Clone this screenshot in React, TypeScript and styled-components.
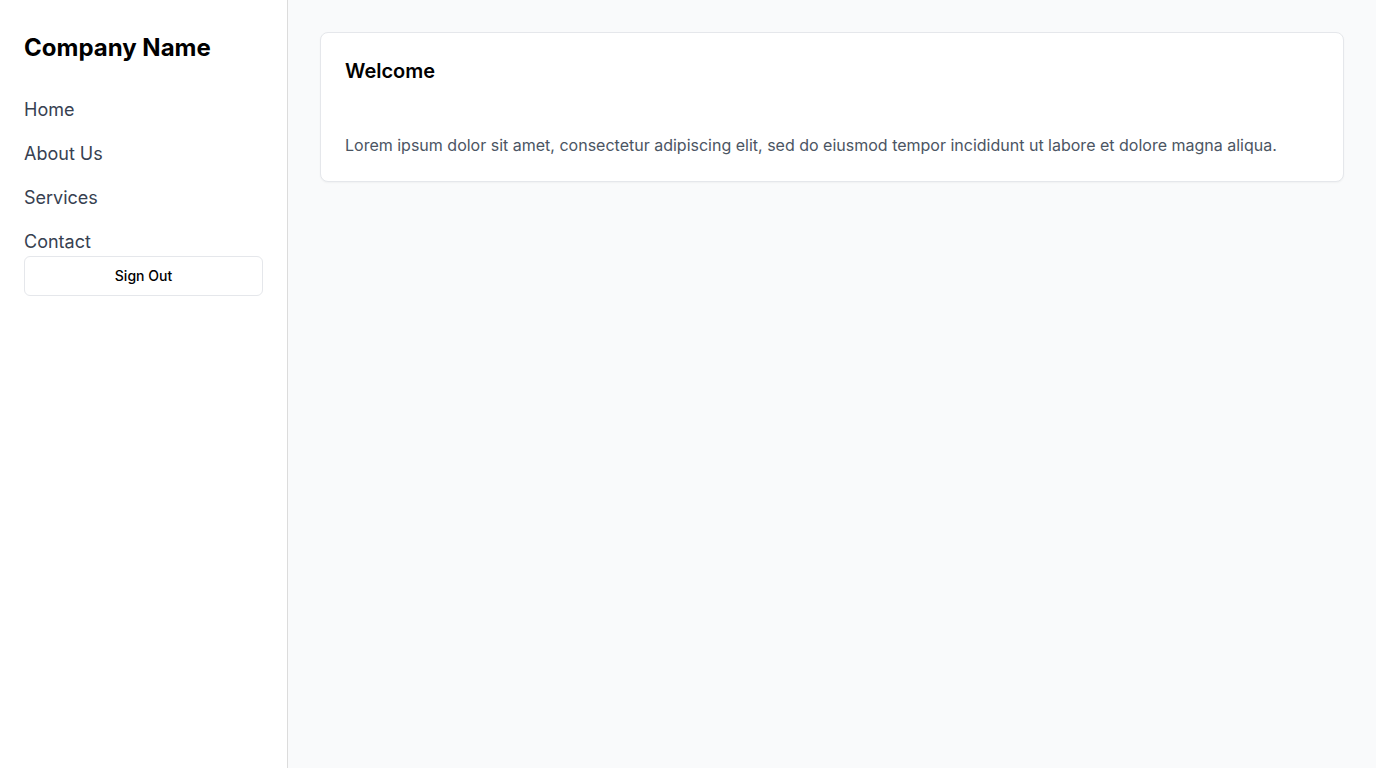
import React from "react";
import styled, { createGlobalStyle } from "styled-components";

const Global = createGlobalStyle`
  html, body { margin: 0; padding: 0; }
  body { font-family: Inter, "Noto Sans", sans-serif; background: #f9fafb; }
  * { box-sizing: border-box; }
`;

const Layout = styled.div`
  display: flex;
  min-height: 100vh;
`;

const Sidebar = styled.aside`
  width: 288px;
  flex-shrink: 0;
  background: #ffffff;
  border-right: 1px solid #dcdcdc;
  padding: 32px 24px;
  display: flex;
  flex-direction: column;
`;

const Brand = styled.h1`
  margin: 0 0 32px;
  font-size: 24px;
  line-height: 32px;
  font-weight: 700;
  color: #000;
`;

const Nav = styled.nav`
  display: flex;
  flex-direction: column;
  gap: 16px;
`;

const NavLink = styled.a`
  font-size: 18px;
  line-height: 28px;
  color: #374151;
  text-decoration: none;
`;

const SignOut = styled.button`
  margin-top: 0;
  height: 40px;
  width: 100%;
  background: #fff;
  border: 1px solid #e5e7eb;
  border-radius: 6px;
  font-family: inherit;
  font-size: 14px;
  font-weight: 500;
  line-height: 20px;
  padding: 0 0 1px;
  color: #000;
`;

const Main = styled.main`
  flex: 1;
  padding: 32px;
  background: #f9fafb;
`;

const Card = styled.section`
  background: #fff;
  border: 1px solid #e5e7eb;
  border-radius: 8px;
  box-shadow: 0 1px 2px rgba(0, 0, 0, 0.04);
  padding: 24px;
`;

const CardTitle = styled.h2`
  margin: 0 0 48px;
  font-size: 20px;
  line-height: 28px;
  font-weight: 600;
  color: #000;
`;

const CardText = styled.p`
  margin: 0;
  font-size: 16px;
  line-height: 24px;
  color: #4b5563;
`;

export default function App() {
  const links = ["Home", "About Us", "Services", "Contact"];
  return (
    <>
      <Global />
      <Layout>
        <Sidebar>
          <Brand>Company Name</Brand>
          <Nav>
            {links.map((l) => (
              <NavLink key={l} href="#">
                {l}
              </NavLink>
            ))}
          </Nav>
          <SignOut>Sign Out</SignOut>
        </Sidebar>
        <Main>
          <Card>
            <CardTitle>Welcome</CardTitle>
            <CardText>
              Lorem ipsum dolor sit amet, consectetur adipiscing elit, sed do eiusmod tempor incididunt ut labore et dolore magna aliqua.
            </CardText>
          </Card>
        </Main>
      </Layout>
    </>
  );
}
